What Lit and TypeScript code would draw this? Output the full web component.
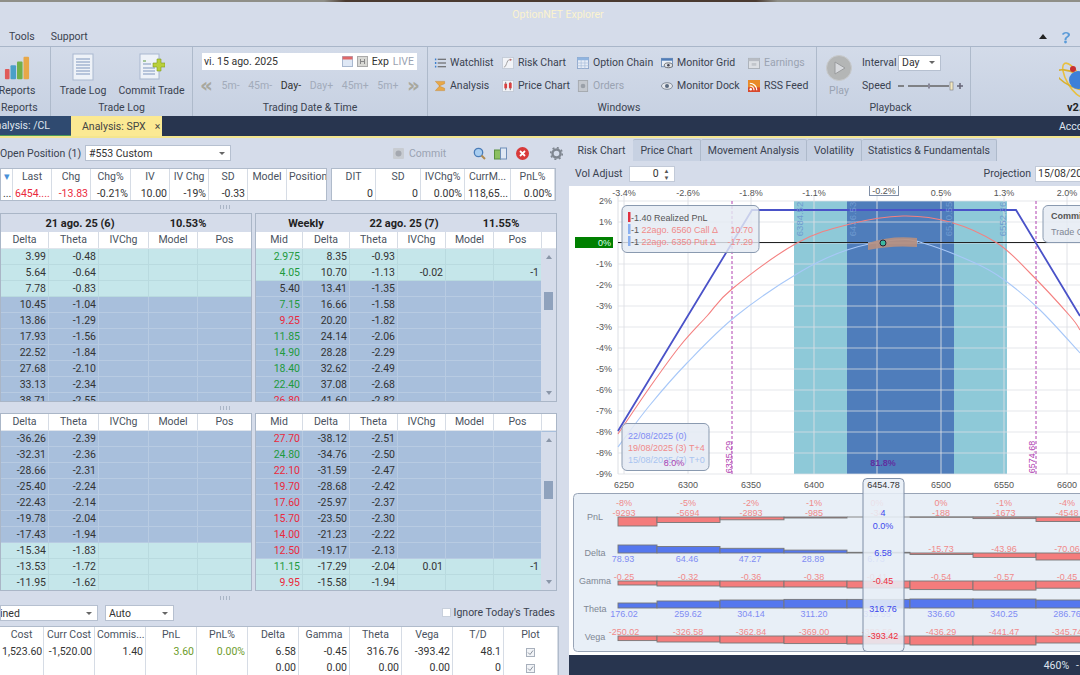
import { LitElement, html, svg, css } from "lit";
import { customElement } from "lit/decorators.js";

type Cell = string | { t: string; c?: string };
const cols = (w: number[]) => `grid-template-columns:${w.map((x) => x + "px").join(" ")}`;
const cell = (v: Cell, base: string) => {
  const t = typeof v === "string" ? v : v.t;
  const c = typeof v === "string" ? "" : v.c || "";
  return html`<div class="cell ${base} ${c}">${t}</div>`;
};
const g = (t: string): Cell => ({ t, c: "green" });
const r = (t: string): Cell => ({ t, c: "red" });

const LW = [48, 50, 50, 49, 54];
const RW = [47, 47, 48, 48, 48, 48, 47];

const up1: [string, string, string][] = [
  ["3.99", "-0.48", "t"], ["5.64", "-0.64", "t"], ["7.78", "-0.83", "t"], ["10.45", "-1.04", "b"],
  ["13.86", "-1.29", "b"], ["17.93", "-1.56", "b"], ["22.52", "-1.84", "b"], ["27.68", "-2.10", "b"],
  ["33.13", "-2.34", "b"], ["38.71", "-2.55", "b"],
];
const up2: [Cell, string, string, string, string, string][] = [
  [g("2.975"), "8.35", "-0.93", "", "", "t"], [g("4.05"), "10.70", "-1.13", "-0.02", "-1", "t"],
  ["5.40", "13.41", "-1.35", "", "", "b"], [g("7.15"), "16.66", "-1.58", "", "", "b"],
  [r("9.25"), "20.20", "-1.82", "", "", "b"], [g("11.85"), "24.14", "-2.06", "", "", "b"],
  [g("14.90"), "28.28", "-2.29", "", "", "b"], [g("18.40"), "32.62", "-2.49", "", "", "b"],
  [g("22.40"), "37.08", "-2.68", "", "", "b"], [r("26.80"), "41.60", "-2.82", "", "", "b"],
];
const lo1: [string, string, string][] = [
  ["-36.26", "-2.39", "b"], ["-32.31", "-2.36", "b"], ["-28.66", "-2.31", "b"], ["-25.40", "-2.24", "b"],
  ["-22.43", "-2.14", "b"], ["-19.78", "-2.04", "b"], ["-17.43", "-1.94", "b"], ["-15.34", "-1.83", "t"],
  ["-13.53", "-1.72", "t"], ["-11.95", "-1.62", "t"],
];
const lo2: [Cell, string, string, string, string, string][] = [
  [r("27.70"), "-38.12", "-2.51", "", "", "b"], [g("24.80"), "-34.76", "-2.50", "", "", "b"],
  [r("22.10"), "-31.59", "-2.47", "", "", "b"], [r("19.70"), "-28.68", "-2.42", "", "", "b"],
  [r("17.60"), "-25.97", "-2.37", "", "", "b"], [r("15.70"), "-23.50", "-2.30", "", "", "b"],
  [r("14.00"), "-21.23", "-2.22", "", "", "b"], [r("12.50"), "-19.17", "-2.13", "", "", "b"],
  [g("11.15"), "-17.29", "-2.04", "0.01", "-1", "t"], [r("9.95"), "-15.58", "-1.94", "", "", "t"],
];

const X = [624, 688, 751, 814, 877, 941, 1004, 1067];
const B = [618, 657, 720, 784, 847, 910, 973, 1036, 1099];
const YL = ["2%", "1%", "0%", "-1%", "-2%", "-3%", "-3%", "-4%", "-5%", "-6%", "-7%", "-8%", "-8%", "-9%"];
const bars = [
  { base: 517, h: [-9, -5.5, -2.8, -1, 0, -0.3, -1.6, -4.5] },
  { base: 553, h: [8, 6.5, 4.7, 2.9, 0.7, -1.5, -4.4, -7] },
  { base: 581, h: [-4, -5, -6, -6, -7, -8.6, -9.1, -7.2] },
  { base: 608, h: [5, 7, 8, 8.6, 8.6, 9, 9, 8] },
  { base: 636, h: [-4.6, -6, -7, -7.6, -8, -9, -9, -7] },
];
const lab = [
  ["-9293", "-5694", "-2893", "-985", "-34", "-188", "-1673", "-4548"],
  ["78.93", "64.46", "47.27", "28.89", "6.73", "-15.73", "-43.96", "-70.06"],
  ["-0.25", "-0.32", "-0.36", "-0.38", "-0.41", "-0.54", "-0.57", "-0.45"],
  ["176.02", "259.62", "304.14", "311.20", "315.55", "336.60", "340.25", "286.76"],
  ["-250.02", "-326.58", "-362.84", "-369.00", "-380.56", "-436.29", "-441.47", "-345.74"],
];
const pct = ["-8%", "-5%", "-2%", "-1%", "0%", "0%", "-1%", "-4%"];

// Catmull-Rom through the sampled curve points, as cubic beziers.
const smooth = (p: number[][]) => {
  let d = `M${p[0][0]} ${p[0][1]}`;
  for (let i = 0; i < p.length - 1; i++) {
    const a = p[Math.max(i - 1, 0)], b = p[i], c = p[i + 1], e = p[Math.min(i + 2, p.length - 1)];
    d += `C${b[0] + (c[0] - a[0]) / 6} ${b[1] + (c[1] - a[1]) / 6} ${c[0] - (e[0] - b[0]) / 6} ${c[1] - (e[1] - b[1]) / 6} ${c[0]} ${c[1]}`;
  }
  return d;
};
const redC = [[618, 434], [650, 387], [680, 346], [707, 316], [732, 289], [797, 243], [850, 224], [903, 216], [950, 222], [997, 243], [1030, 273], [1070, 316], [1080, 330]];
const blueC = [[618, 447], [650, 405], [687, 363], [736, 316], [800, 272], [847, 250], [895, 240], [923, 243], [975, 263], [1003, 279], [1040, 310], [1080, 353]];

@customElement("app-root")
export class AppRoot extends LitElement {
  static styles = css`
    :host { display: block; width: 1080px; height: 675px; overflow: hidden; background: #d5dcea; color: #3a4250;
      font: 10.5px Roboto, "Noto Sans", sans-serif; }
    * { box-sizing: border-box; }
    .strip { height: 2px; background: linear-gradient(90deg, #8f8f88 0 30%, #4a3a30 32% 70%, #8f8f88 72%); }
    .title { height: 25px; display: flex; align-items: center; justify-content: center; color: #fbf3cf; padding-left: 36px; }
    .menu { height: 20px; display: flex; align-items: center; border-bottom: 1px solid #a9b6c9; padding-left: 9px; gap: 16px; position: relative; }
    .menu .end { margin-left: auto; display: flex; gap: 14px; align-items: center; padding-right: 9px; }
    .tri { width: 0; height: 0; border: 4px solid transparent; border-top: 0; border-bottom: 5px solid #222; }
    .ribbon { height: 69px; display: flex; background: linear-gradient(#d3dbe9, #c7d1e2); }
    .grp { display: flex; flex-direction: column; border-right: 1px solid #aebacb; flex: none; }
    .grp .body { flex: 1; display: flex; min-height: 0; }
    .grp .glabel { height: 16px; line-height: 16px; text-align: center; }
    .big { display: flex; flex-direction: column; align-items: center; justify-content: space-between; padding-top: 6px; height: 50px; white-space: nowrap; }
    .dim { color: #9aa3b2; }
    .datebox { width: 215px; height: 17px; margin: 6px 0 0 9px; background: #fff; display: flex; align-items: center; padding: 0 3px 0 2px; color: #333; gap: 4px; }
    .datebox .sp { flex: 1; }
    .nav { display: flex; margin: 6px 0 0 7px; width: 220px; align-items: center; height: 18px; color: #a2abba; justify-content: space-between; }
    .nav b { font-weight: 400; color: #333; }
    .arr { color: #a8a89e; font: bold 20px/16px "DejaVu Sans", sans-serif; }
    .wgrid { display: grid; grid-template-columns: 68px 75px 84px 87px 60px; grid-auto-rows: 23px; padding: 4px 0 0 6px; }
    .wi { display: flex; align-items: center; gap: 4px; white-space: nowrap; }
    .wi svg { width: 12px; height: 12px; flex: none; }
    .combo { background: #fff; display: flex; align-items: center; justify-content: space-between; padding: 0 5px 0 3px; color: #333; border: 1px solid #b6c0d0; }
    .combo i { width: 0; height: 0; border: 3px solid transparent; border-bottom: 0; border-top: 3px solid #666; }
    .pb { display: grid; grid-template-columns: 36px 65px; grid-auto-rows: 23px; align-items: center; padding: 4px 0 0 1px; }
    .logo { overflow: hidden; font-weight: 700; color: #222; }
    .bar { height: 20px; background: #28354f; display: flex; color: #dfe5ef; overflow: hidden; }
    .tab1 { width: 71px; background: #2f4a70; display: flex; justify-content: flex-end; align-items: center; padding-right: 21px; white-space: nowrap; border-bottom: 1px solid #4b9a5a; }
    .tab2 { width: 91px; background: #fbe993; color: #444; display: flex; align-items: center; padding-left: 11px; gap: 9px; white-space: nowrap; }
    .acc { margin-left: auto; margin-right: -20px; display: flex; align-items: center; width: 41px; white-space: nowrap; }
    .yl { height: 2px; background: #f4e58e; }
    .main { display: flex; height: 537px; }
    .left { width: 565px; flex: none; display: flex; flex-direction: column; }
    .split { display: flex; align-items: center; justify-content: center; flex: none; padding-right: 117px; }
    .split i { width: 11px; height: 4px; background: radial-gradient(circle, #aab5c6 40%, transparent 45%) 0 0 / 3px 2px; }
    .vsplit { width: 4px; flex: none; }
    .pos { height: 30px; display: flex; align-items: center; flex: none; }
    .pos .name { width: 85px; white-space: nowrap; }
    .pos .combo { width: 146px; height: 16px; }
    .pos .tools { margin-left: 161px; display: flex; align-items: center; }
    .tools .dim { margin: 0 18px 0 4px; }
    .tools svg { width: 13px; height: 13px; flex: none; }
    .quote { display: flex; gap: 4px; height: 33px; flex: none; }
    .tbl { border: 1px solid #b0bbcb; background: #fff; overflow: hidden; flex: none; }
    .hrow, .drow { display: grid; }
    .hrow { height: 17px; }
    .drow { height: 16px; }
    .cell { white-space: nowrap; overflow: hidden; text-align: right; padding: 0 2px; line-height: 15px; border-right: 1px solid #d6dce5; color: #333; }
    .hcell { text-align: center; color: #4a5260; line-height: 16px; }
    .blue { color: #4a90d8; }
    .red { color: #ea2a3c; }
    .green { color: #1f9a3d; }
    .dg { color: #6d9b2a; }
    .chains { flex: none; display: flex; gap: 3px; }
    .chain { border: 1px solid #aab6c7; background: #d5dcea; overflow: hidden; flex: none; position: relative; }
    .ttl { display: grid; height: 18px; align-items: center; font-weight: 700; color: #222; font-size: 11px; text-align: center; background: #d5dcea; white-space: nowrap; }
    .chain .hrow { background: #fff; border-bottom: 1px solid #e0e5ec; }
    .t { background: #c5e6ea; }
    .b { background: #a8bfdc; }
    .t .cell { border-right-color: #b9dadf; border-bottom: 1px solid #b9dadf; }
    .b .cell { border-right-color: #b8cbe2; border-bottom: 1px solid #b8cbe2; }
    .scroll { position: absolute; right: 0; bottom: 0; width: 15px; background: #d5dcea; display: flex; flex-direction: column; align-items: center; justify-content: space-between; padding: 6px 0; }
    .scroll i { width: 0; height: 0; border: 3px solid transparent; }
    .scroll .u { border-top: 0; border-bottom: 4px solid #8a96a8; }
    .scroll .d { border-bottom: 0; border-top: 4px solid #8a96a8; }
    .thumb { position: absolute; left: 3px; width: 9px; height: 18px; background: #8fa2bd; }
    .ctl { height: 21px; display: flex; align-items: flex-start; flex: none; gap: 7px; }
    .ctl .combo { height: 16px; }
    .ctl .cl1 { width: 98px; overflow: hidden; }
    .ctl .cl2 { width: 69px; }
    .ign { margin-left: auto; display: flex; align-items: center; gap: 3px; padding-right: 10px; height: 14px; }
    .ign i { width: 9px; height: 9px; background: #fff; border: 1px solid #c8d0dc; }
    .pt { width: 559px; border-right: 1px solid #b0bbcb; border-left: 0; border-bottom: 0; }
    .chk { display: flex; align-items: center; justify-content: center; }
    .chk svg { width: 9px; height: 9px; }
    .right { width: 511px; flex: none; display: flex; flex-direction: column; overflow: hidden; }
    .tabs { display: flex; height: 23px; padding: 1px 0 0 1px; flex: none; }
    .tb { display: flex; align-items: center; justify-content: center; background: #c7d1e2; border: 1px solid #aebacb; border-bottom: 0; border-left: 0; border-radius: 2px 2px 0 0; white-space: nowrap; }
    .tb.on { background: #d5dcea; border: 0; }
    .vol { height: 25px; display: flex; align-items: center; padding: 0 0 0 6px; flex: none; }
    .vol .spin { width: 46px; height: 16px; margin-left: 6px; background: #fff; border: 1px solid #c2cad8; display: flex; align-items: center; justify-content: flex-end; gap: 5px; padding-right: 4px; color: #333; }
    .vol .spin u { text-decoration: none; font-size: 6px; line-height: 7px; color: #555; display: flex; flex-direction: column; }
    .proj { margin-left: auto; display: flex; align-items: center; margin-right: -20px; gap: 4px; }
    .proj div { background: #fff; width: 65px; height: 16px; padding-left: 2px; border: 1px solid #c2cad8; color: #333; line-height: 14px; white-space: nowrap; overflow: hidden; }
    .chart { display: block; width: 511px; height: 469px; flex: none; background: #fff; }
    .chart text { font: 9px "Liberation Sans", Arial, sans-serif; fill: #555; }
    .chart .m { text-anchor: middle; }
    .chart .e { text-anchor: end; }
    .chart .pr { fill: #f08a8a; }
    .chart .pb2 { fill: #7f8cf4; }
    .chart .rl { fill: #7f8794; }
    .chart .pu { fill: #b040b0; }
    .chart .dk { fill: #333; }
    .chart .vb { fill: #6f9bd0; font-size: 9.5px; }
    .chart .cb { fill: #3c48ee; }
    .chart .cr { fill: #ee2c3c; }
    .status { height: 20px; background: #28354f; color: #dfe5ef; display: flex; align-items: center; justify-content: flex-end; gap: 7px; padding-right: 1px; flex: none; }
  `;

  quote() {
    const w1 = [12, 39, 39, 40, 39, 39, 39, 39, 40];
    const w2 = [44, 45, 44, 46, 44];
    return html`<div class="quote">
      <div class="tbl" style="width:327px">
        <div class="hrow" style=${cols(w1)}>${[{ t: "▾", c: "blue" }, "Last", "Chg", "Chg%", "IV", "IV Chg", "SD", "Model", "Position"].map((h) => cell(h, "hcell"))}</div>
        <div class="drow" style=${cols(w1)}>${["...", r("6454...."), r("-13.83"), "-0.21%", "10.00", "-19%", "-0.33", "", ""].map((c) => cell(c, ""))}</div>
      </div>
      <div class="tbl" style="width:225px">
        <div class="hrow" style=${cols(w2)}>${["DIT", "SD", "IVChg%", "CurrM...", "PnL%"].map((h) => cell(h, "hcell"))}</div>
        <div class="drow" style=${cols(w2)}>${["0", "0", "0.00%", "118,65...", "0.00%"].map((c) => cell(c, ""))}</div>
      </div>
    </div>`;
  }

  chains(d1: [string, string, string][], d2: [Cell, string, string, string, string, string][], title: boolean, h: number, top: number) {
    const hh1 = ["Delta", "Theta", "IVChg", "Model", "Pos"];
    const hh2 = ["Mid", "Delta", "Theta", "IVChg", "Model", "Pos", ""];
    return html`<div class="chains" style="height:${h}px">
      <div class="chain" style="width:252px">
        ${title ? html`<div class="ttl" style=${cols([30, 98, 34, 50, 38])}><span></span><span>21 ago. 25 (6)</span><span></span><span>10.53%</span></div>` : ""}
        <div class="hrow" style=${cols(LW)}>${hh1.map((x) => cell(x, "hcell"))}</div>
        ${d1.map((x) => html`<div class="drow ${x[2]}" style=${cols(LW)}>${[x[0], x[1], "", "", ""].map((c) => cell(c, ""))}</div>`)}
      </div>
      <div class="chain" style="width:302px">
        ${title ? html`<div class="ttl" style=${cols([100, 96, 98, 6])}><span>Weekly</span><span>22 ago. 25 (7)</span><span>11.55%</span></div>` : ""}
        <div class="hrow" style=${cols(RW)}>${hh2.map((x) => cell(x, "hcell"))}</div>
        ${d2.map((x) => html`<div class="drow ${x[5]}" style=${cols(RW)}>${[x[0], x[1], x[2], x[3], "", x[4], ""].map((c) => cell(c, ""))}</div>`)}
        <div class="scroll" style="top:${title ? 35 : 18}px"><i class="u"></i><div class="thumb" style="top:${top}px"></div><i class="d"></i></div>
      </div>
    </div>`;
  }

  positions() {
    const w = [44, 51, 51, 51, 51, 51, 51, 52, 51, 51, 54];
    const ck = html`<svg viewBox="0 0 9 9"><rect x=".5" y=".5" width="8" height="8" fill="#f2f4f7" stroke="#a8b0bc"/><path d="M2 4.5L4 6.5 7 2.5" stroke="#8a929e" fill="none"/></svg>`;
    return html`<div class="tbl pt">
      <div class="hrow" style=${cols(w)}>${["Cost", "Curr Cost", "Commis...", "PnL", "PnL%", "Delta", "Gamma", "Theta", "Vega", "T/D", "Plot"].map((h) => cell(h, "hcell"))}</div>
      <div class="drow" style=${cols(w)}>
        ${["1,523.60", "-1,520.00", "1.40", { t: "3.60", c: "dg" }, { t: "0.00%", c: "dg" }, "6.58", "-0.45", "316.76", "-393.42", "48.1"].map((c) => cell(c as Cell, ""))}
        <div class="cell chk">${ck}</div>
      </div>
      <div class="drow" style=${cols(w)}>
        ${["", "", "", "", "", "0.00", "0.00", "0.00", "0.00", "0"].map((c) => cell(c, ""))}
        <div class="cell chk">${ck}</div>
      </div>
    </div>`;
  }

  ribbon() {
    const doc = html`<svg width="22" height="28" viewBox="0 0 22 28"><rect x="1" y="1" width="20" height="26" fill="#eef2f8" stroke="#a9b8cf"/><path d="M4 6h14M4 9h14M4 12h14M4 15h14M4 18h14M4 21h14" stroke="#7f96bd"/></svg>`;
    const add = html`<svg width="26" height="28" viewBox="0 0 26 28"><rect x="1" y="1" width="19" height="25" fill="#eef2f8" stroke="#a9b8cf"/><path d="M4 11h8M4 15h12M4 18h12M4 21h12" stroke="#7f96bd"/><path d="M4 8h3" stroke="#5b9a3a"/><path d="M14 10h4V6h4v4h4v4h-4v4h-4v-4h-4z" fill="#b9cf3a" stroke="#7e9a20" stroke-width=".6"/></svg>`;
    const chart = html`<svg width="26" height="26" viewBox="0 0 28 28"><rect x="1" y="15" width="5" height="11" rx="1" fill="#e05a5a"/><rect x="7" y="11" width="6" height="15" rx="1" fill="#4aa0c8"/><rect x="14" y="7" width="6" height="19" rx="1" fill="#72b04a"/><rect x="21" y="2" width="6" height="24" rx="1" fill="#e8a848"/></svg>`;
    const w = (t: string, ic: unknown, dim = false) => html`<div class="wi ${dim ? "dim" : ""}">${ic}${t}</div>`;
    const ic = {
      list: html`<svg viewBox="0 0 13 13"><path d="M4 2.5h9M4 6.5h9M4 10.5h9" stroke="#555" stroke-width="1.2"/><path d="M1 2.5h1.5M1 6.5h1.5M1 10.5h1.5" stroke="#3a7fd0" stroke-width="2"/></svg>`,
      sum: html`<svg viewBox="0 0 13 13"><path d="M1.5 1.5h10v2.5L5.5 6.5 11.5 9v2.5h-10L6 6.5z" fill="#e8a848" stroke="#c88428" stroke-width=".5"/></svg>`,
      risk: html`<svg viewBox="0 0 13 13"><rect x=".5" y=".5" width="12" height="12" fill="#f2f4f8" stroke="#c4ccd8"/><path d="M2 11c3 0 3-8 6-8h3" fill="none" stroke="#999"/><path d="M9 2v2" stroke="#d05050"/></svg>`,
      price: html`<svg viewBox="0 0 13 13"><rect x=".5" y=".5" width="12" height="12" fill="#f2f4f8" stroke="#c4ccd8"/><path d="M4 2v9" stroke="#777"/><rect x="2.5" y="4" width="3" height="5" fill="#d84040"/><path d="M9 2v9" stroke="#777"/><rect x="7.5" y="3" width="3" height="6" fill="#d84040"/></svg>`,
      grid: html`<svg viewBox="0 0 13 13"><rect x=".5" y=".5" width="12" height="12" fill="#e6ecf6" stroke="#8fa8cc"/><rect x=".5" y=".5" width="12" height="3" fill="#8fb4e0"/><path d="M4.5 3v10M8.5 3v10M0 6.5h13M0 9.5h13" stroke="#a5bbd8" stroke-width=".7"/></svg>`,
      dollar: html`<svg viewBox="0 0 13 13"><rect x="1.5" y=".5" width="10" height="12" fill="#c4c8ce" stroke="#a4a8ae"/><circle cx="6.5" cy="6.5" r="2.5" fill="#9aa0a8"/></svg>`,
      mon: html`<svg viewBox="0 0 13 13"><rect x=".5" y="1.5" width="12" height="9" fill="#eaf0f8" stroke="#6f8eb8"/><rect x=".5" y="1.5" width="12" height="2.5" fill="#4f7cb8"/><ellipse cx="8" cy="9" rx="4.5" ry="2.6" fill="#dfe4ea" stroke="#666"/><circle cx="8" cy="9" r="1.4" fill="#445"/></svg>`,
      eye: html`<svg viewBox="0 0 13 13"><ellipse cx="6.5" cy="6.5" rx="6" ry="3.6" fill="#e6e8ec" stroke="#7d8794"/><circle cx="6.5" cy="6.5" r="2.2" fill="#5a6a80"/></svg>`,
      earn: html`<svg viewBox="0 0 13 13"><rect x=".5" y="1.5" width="12" height="11" fill="#dcdfe4" stroke="#aab0b8"/><rect x=".5" y="1.5" width="12" height="3" fill="#b8bcc4"/><rect x="4" y="6.5" width="5" height="3" fill="#c2c6cc"/></svg>`,
      rss: html`<svg viewBox="0 0 13 13"><rect width="13" height="13" fill="#e88a28"/><rect y="8" width="13" height="5" fill="#d8482c"/><circle cx="3" cy="10" r="1.3" fill="#fff"/><path d="M2 6.5a4.5 4.5 0 0 1 4.5 4.5M2 3.5a7.5 7.5 0 0 1 7.5 7.5" fill="none" stroke="#fff" stroke-width="1.3"/></svg>`,
      cal: html`<svg width="11" height="11" viewBox="0 0 11 11"><rect x=".5" y=".5" width="10" height="10" fill="#dfe8f5" stroke="#a9b8cf"/><rect x=".5" y=".5" width="10" height="3" fill="#e06868"/></svg>`,
      hl: html`<svg width="11" height="11" viewBox="0 0 11 11"><rect x=".5" y=".5" width="10" height="10" fill="#d8d8d4" stroke="#aaa"/><path d="M3.5 3v5M7.5 3v5M3.5 5.5h4" stroke="#888"/></svg>`,
    };
    return html`<div class="ribbon">
      <div class="grp" style="width:51px"><div class="body"><div class="big" style="width:34px;padding-top:8px">${chart}<span>Reports</span></div></div><div class="glabel" style="text-align:left;padding-left:1px">Reports</div></div>
      <div class="grp" style="width:142px"><div class="body" style="padding-left:9px;gap:13px"><div class="big" style="width:46px">${doc}<span>Trade Log</span></div><div class="big" style="width:65px">${add}<span>Commit Trade</span></div></div><div class="glabel">Trade Log</div></div>
      <div class="grp" style="width:235px"><div class="body" style="flex-direction:column">
        <div class="datebox"><span>vi. 15 ago. 2025</span><span class="sp"></span>${ic.cal}${ic.hl}<span>Exp</span><span class="dim">LIVE</span></div>
        <div class="nav"><span class="arr">«</span><span>5m-</span><span>45m-</span><b>Day-</b><span>Day+</span><span>45m+</span><span>5m+</span><span class="arr">»</span></div>
      </div><div class="glabel">Trading Date &amp; Time</div></div>
      <div class="grp" style="width:389px"><div class="body"><div class="wgrid">
        ${w("Watchlist", ic.list)}${w("Risk Chart", ic.risk)}${w("Option Chain", ic.grid)}${w("Monitor Grid", ic.mon)}${w("Earnings", ic.earn, true)}
        ${w("Analysis", ic.sum)}${w("Price Chart", ic.price)}${w("Orders", ic.dollar, true)}${w("Monitor Dock", ic.eye)}${w("RSS Feed", ic.rss)}
      </div></div><div class="glabel" style="padding-right:6px">Windows</div></div>
      <div class="grp" style="width:154px"><div class="body">
        <div class="big dim" style="width:44px;padding-top:8px"><svg width="26" height="26" viewBox="0 0 26 26"><circle cx="13" cy="13" r="12.5" fill="#b4b6b6" stroke="#c8cacc"/><path d="M9 7l10 6-10 6z" fill="#d8dade" stroke="#9a9c9e"/></svg><span>Play</span></div>
        <div class="pb"><span>Interval</span><div class="combo" style="width:43px;height:16px">Day<i></i></div><span>Speed</span>
          <svg width="65" height="10" viewBox="0 0 65 10"><path d="M0 5h6M10 5h41" stroke="#666" stroke-width="1.5"/><rect x="30" y="2.5" width="2" height="5" fill="#889"/><rect x="52" y="1" width="3" height="8" fill="#f4e9c0" stroke="#888" stroke-width=".7"/><path d="M62 2v6M59 5h6" stroke="#667" stroke-width="1.5"/></svg></div>
      </div><div class="glabel" style="padding-right:6px">Playback</div></div>
      <div class="grp logo" style="width:110px;border:0;padding-left:88px">
        <svg width="32" height="42" viewBox="0 0 32 42" style="flex:none;margin-top:12px"><ellipse cx="15" cy="21" rx="7" ry="19" transform="rotate(-30 15 21)" fill="none" stroke="#e8c040" stroke-width="1.6"/><ellipse cx="15" cy="21" rx="19" ry="7" transform="rotate(25 15 21)" fill="none" stroke="#d8b030" stroke-width="1.6"/><circle cx="19" cy="21" r="9" fill="#3d80d8"/><circle cx="14" cy="10" r="3" fill="#c83030"/></svg>
        <span style="padding-left:8px;line-height:13px;font-size:11px">v2.</span>
      </div>
    </div>`;
  }

  chart() {
    const ys = YL.map((_, i) => 201 + i * 21);
    const bot = [["PnL", 520], ["Delta", 556], ["Gamma", 584], ["Theta", 612], ["Vega", 640]] as [string, number][];
    return html`<svg class="chart" viewBox="569 186 511 469">
      <rect x="794" y="201" width="213" height="273" fill="#8ec9d8"/>
      <rect x="847" y="201" width="107" height="273" fill="#4f7dbb"/>
      ${ys.map((y) => svg`<path d="M618 ${y}H1080" stroke="#dcdfe4" stroke-opacity=".75" stroke-width="1.2"/>`)}
      ${X.map((x) => svg`<path d="M${x} 195V474" stroke="#dcdfe4" stroke-opacity=".75" stroke-width="1.2"/>`)}
      <path d="M618 195V474" stroke="#dcdfe4"/>
      ${["-3.4%", "-2.6%", "-1.8%", "-1.1%", "", "0.5%", "1.3%", "2.0%"].map((t, i) => svg`<text class="m" x=${X[i]} y="196">${t}</text>`)}
      <rect x="869.5" y="185.5" width="29" height="10" fill="#fff" stroke="#7f8ea6"/><text class="m" x="884" y="194">-0.2%</text>
      ${YL.map((t, i) => i === 2 ? "" : svg`<text class="e" x="612" y=${ys[i] + 3}>${t}</text>`)}
      ${["6250", "6300", "6350", "6400", "", "6500", "6550", "6600"].map((t, i) => svg`<text class="m" x=${X[i]} y="488">${t}</text>`)}
      <rect x="575" y="237" width="38" height="11" fill="#008000"/><text class="e" x="611" y="246" style="fill:#dfe">0%</text>
      <path d="M618 242.5H868M918 242.5H1080" stroke="#222"/>
      <path d="M732 201V474M1036 201V474" stroke="#b040b0" stroke-dasharray="3 2"/>
      <polyline points="618,431 752,210 1016,210 1080,316" fill="none" stroke="#4a52c8" stroke-width="1.8"/>
      <path d=${smooth(redC)} fill="none" stroke="#f48080" stroke-width="1.1"/>
      <path d=${smooth(blueC)} fill="none" stroke="#a8c8f8" stroke-width="1.1"/>
      <path d="M868 243q24-8 49-5v9q-25-2-49 3z" fill="#b89080" fill-opacity=".9"/>
      <circle cx="883" cy="243" r="3" fill="#3cb8a0" stroke="#223"/>
      ${[[803, 219, "6384.52"], [856, 219, "6436.53"], [952, 219, "6510.55"], [1006, 219, "6552.36"]].map((a) => svg`<text class="m vb" transform="rotate(-90 ${a[0]} ${a[1]})" x=${a[0]} y=${a[1]}>${a[2]}</text>`)}
      ${[[732, 457, "6335.29"], [1035, 457, "6574.68"]].map((a) => svg`<text class="m pu" transform="rotate(-90 ${a[0]} ${a[1]})" x=${a[0]} y=${a[1]}>${a[2]}</text>`)}

      <rect x="622" y="205.5" width="137" height="47" rx="5" fill="#e4eaf3" fill-opacity=".82" stroke="#8a9ab0"/>
      <rect x="628" y="212" width="2.5" height="10" fill="#e03040"/><rect x="628" y="224" width="2.5" height="10" fill="#8ab0f0"/><rect x="628" y="236" width="2.5" height="10" fill="#8ab0f0"/>
      <text x="631" y="221">-1.40 Realized PnL</text>
      <text x="631" y="233">-1 <tspan class="pr">22ago. 6560 Call Δ</tspan></text><text class="e pr" x="753" y="233">10.70</text>
      <text x="631" y="245">-1 <tspan class="pr">22ago. 6350 Put Δ</tspan></text><text class="e pr" x="753" y="245">-17.29</text>
      <rect x="1043" y="205.5" width="60" height="37" rx="5" fill="#e4eaf3" fill-opacity=".82" stroke="#8a9ab0"/>
      <text x="1051" y="219" style="font-weight:600">Commission</text><text x="1051" y="235" class="rl">Trade Cost</text>
      <rect x="622" y="423.5" width="87" height="47" rx="5" fill="#e4eaf3" fill-opacity=".85" stroke="#8a9ab0"/>
      <text class="pb2" x="628" y="439">22/08/2025 (0)</text>
      <text class="pr" x="628" y="451">19/08/2025 (3) T+4</text>
      <text x="628" y="463" style="fill:#a8c4f0">15/08/2025 (7) T+0</text>
      <text class="m pu" x="674" y="466">8.0%</text>
      <text class="m" x="883" y="466" style="fill:#6030a0;font-weight:700">81.8%</text>

      <rect x="573.5" y="493.5" width="520" height="158" rx="4" fill="#e8eff7" stroke="#98a4b6"/>
      ${bot.map((b) => svg`<text class="m rl" x="595" y=${b[1]}>${b[0]}</text>`)}
      ${bars.map((row) => row.h.map((h, i) => h === 0 ? "" : svg`<rect x=${B[i]} y=${h > 0 ? row.base - h : row.base} width=${B[i + 1] - B[i]} height=${Math.abs(h)} fill=${h > 0 ? "#5577ee" : "#f47c7c"} stroke="#777" stroke-width=".9"/>`))}
      <path d="M847 517H1080" stroke="#888"/>
      ${pct.map((t, i) => svg`<text class="m pr" x=${X[i]} y="506">${t}</text>`)}
      ${lab[0].map((t, i) => svg`<text class="m pr" x=${X[i]} y="516">${t}</text>`)}
      ${lab[1].map((t, i) => i < 5 ? svg`<text class="m pb2" x=${X[i] - 1} y="562">${t}</text>` : svg`<text class="m pr" x=${X[i]} y="552">${t}</text>`)}
      ${lab[2].map((t, i) => svg`<text class="m pr" x=${X[i]} y="580">${t}</text>`)}
      ${lab[3].map((t, i) => svg`<text class="m pb2" x=${X[i]} y="617">${t}</text>`)}
      ${lab[4].map((t, i) => svg`<text class="m pr" x=${X[i]} y="635">${t}</text>`)}
      <rect x="863" y="478.5" width="41" height="173" rx="4" fill="#e8eff7" fill-opacity=".86" stroke="#7f8ea6"/>
      <text class="m dk" x="883.5" y="488">6454.78</text>
      <text class="m cb" x="883" y="516">4</text><text class="m cb" x="883" y="529">0.0%</text>
      <text class="m cb" x="883" y="556">6.58</text><text class="m cr" x="883" y="584">-0.45</text>
      <text class="m cb" x="883" y="612">316.76</text><text class="m cr" x="883" y="639">-393.42</text>
    </svg>`;
  }

  render() {
    return html`
      <div class="strip"></div>
      <div class="title">OptionNET Explorer</div>
      <div class="menu"><span>Tools</span><span>Support</span>
        <div class="end"><i class="tri"></i>
          <svg width="10" height="14" viewBox="0 0 10 14"><path d="M1 4.5C1 1 9 1 9 4.5c0 2.8-3.5 2.5-3.5 5.5h-2c0-3.5 3.3-3.2 3.3-5.2 0-1.8-3.5-1.6-3.8 0z" fill="#5b9bd8"/><circle cx="4.5" cy="12" r="1.4" fill="#5b9bd8"/></svg>
        </div>
      </div>
      ${this.ribbon()}
      <div class="bar"><div class="tab1">Analysis: /CL</div><div class="tab2">Analysis: SPX<span>×</span></div><div class="acc">Account</div></div>
      <div class="yl"></div>
      <div class="main">
        <div class="left">
          <div class="pos">
            <span class="name">Open Position (1)</span>
            <div class="combo"><span>#553 Custom</span><i></i></div>
            <div class="tools">
              <svg viewBox="0 0 13 13"><rect x="1" y="1" width="11" height="11" rx="1" fill="#c8ccd2"/><circle cx="6.5" cy="6.5" r="3" fill="#a4a8b0"/></svg>
              <span class="dim" style="width:44px">Commit</span>
              <svg viewBox="0 0 13 13" style="margin-left:2px"><circle cx="5.5" cy="5.5" r="4.2" fill="#a8cdf0" stroke="#4a7cb8" stroke-width="1.3"/><path d="M8.5 8.5L12 12" stroke="#b08a50" stroke-width="2"/></svg>
              <svg viewBox="0 0 13 13" style="margin-left:8px"><rect x=".5" y="3" width="6" height="9" fill="#8cc060" stroke="#5a9040"/><rect x="6.5" y="1" width="6" height="11" fill="#dfe8f4" stroke="#6f8eb8"/></svg>
              <svg viewBox="0 0 13 13" style="margin-left:9px"><circle cx="6.5" cy="6.5" r="6.5" fill="#d83a3a"/><path d="M4 4l5 5M9 4l-5 5" stroke="#fff" stroke-width="1.8"/></svg>
              <svg viewBox="0 0 13 13" style="margin-left:21px"><circle cx="6.5" cy="6.5" r="4" fill="none" stroke="#7f8690" stroke-width="2.4"/><circle cx="6.5" cy="6.5" r="5.8" fill="none" stroke="#7f8690" stroke-width="1.6" stroke-dasharray="2 2.5"/></svg>
            </div>
          </div>
          ${this.quote()}
          <div class="split" style="height:12px"><i></i></div>
          ${this.chains(up1, up2, true, 189, 43)}
          <div class="split" style="height:11px"><i></i></div>
          ${this.chains(lo1, lo2, false, 178, 49)}
          <div class="split" style="height:14px"><i></i></div>
          <div class="ctl">
            <div class="combo cl1"><span style="margin-left:-4px">ined</span><i></i></div>
            <div class="combo cl2"><span>Auto</span><i></i></div>
            <div class="ign"><i></i><span>Ignore Today's Trades</span></div>
          </div>
          ${this.positions()}
        </div>
        <div class="vsplit"></div>
        <div class="right">
          <div class="tabs">
            <div class="tb on" style="width:63px">Risk Chart</div><div class="tb" style="width:68px">Price Chart</div>
            <div class="tb" style="width:106px">Movement Analysis</div><div class="tb" style="width:55px">Volatility</div>
            <div class="tb" style="width:135px">Statistics &amp; Fundamentals</div>
          </div>
          <div class="vol"><span>Vol Adjust</span><div class="spin"><span>0</span><u><span>▲</span><span>▼</span></u></div>
            <div class="proj"><span>Projection</span><div>15/08/2025</div></div></div>
          ${this.chart()}
          <div class="status"><span>460%</span><span>-</span></div>
        </div>
      </div>`;
  }
}
